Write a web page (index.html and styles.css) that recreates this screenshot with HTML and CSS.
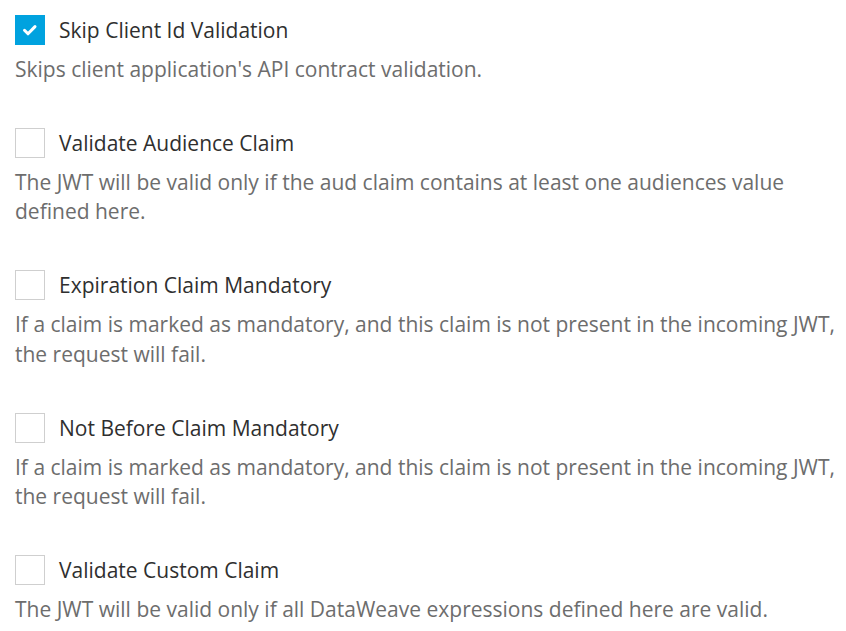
FILE: index.html
```html
<!DOCTYPE html>
<html>
<head>
<meta charset="utf-8">
<link rel="stylesheet" href="styles.css">
</head>
<body>
<div class="list">
  <div class="item">
    <div class="row">
      <span class="box checked"><svg viewBox="0 0 30 30" width="30" height="30"><path d="M9.5 15.3 L13 18.8 L20 11.6" fill="none" stroke="#fff" stroke-width="3" stroke-linecap="round" stroke-linejoin="round"/></svg></span>
      <span class="label">Skip Client Id Validation</span>
    </div>
    <p class="desc">Skips client application's API contract validation.</p>
  </div>
  <div class="item">
    <div class="row">
      <span class="box"></span>
      <span class="label">Validate Audience Claim</span>
    </div>
    <p class="desc">The JWT will be valid only if the aud claim contains at least one audiences value defined here.</p>
  </div>
  <div class="item">
    <div class="row">
      <span class="box"></span>
      <span class="label">Expiration Claim Mandatory</span>
    </div>
    <p class="desc">If a claim is marked as mandatory, and this claim is not present in the incoming JWT, the request will fail.</p>
  </div>
  <div class="item">
    <div class="row">
      <span class="box"></span>
      <span class="label">Not Before Claim Mandatory</span>
    </div>
    <p class="desc">If a claim is marked as mandatory, and this claim is not present in the incoming JWT, the request will fail.</p>
  </div>
  <div class="item">
    <div class="row">
      <span class="box"></span>
      <span class="label">Validate Custom Claim</span>
    </div>
    <p class="desc">The JWT will be valid only if all DataWeave expressions defined here are valid.</p>
  </div>
</div>
</body>
</html>
```
FILE: styles.css
```css
html, body {
  margin: 0;
  padding: 0;
  background: #ffffff;
}
body {
  font-family: "Open Sans", "Noto Sans", sans-serif;
}
.list {
  padding: 15px 0 0 15px;
  display: flex;
  flex-direction: column;
  gap: 43.6px;
}
.row {
  display: flex;
  align-items: center;
  height: 30px;
}
.box {
  width: 30px;
  height: 30px;
  box-sizing: border-box;
  border: 1px solid #cfcfcf;
  background: #fff;
  flex: none;
  display: flex;
}
.box.checked {
  border: none;
  background: #00a2df;
}
.label {
  margin-left: 14px;
  font-size: 21px;
  color: #2f2f2f;
}
.desc {
  margin: 10px 0 0 0;
  font-size: 21px;
  line-height: 1.4;
  color: #6d6d6d;
}
```
